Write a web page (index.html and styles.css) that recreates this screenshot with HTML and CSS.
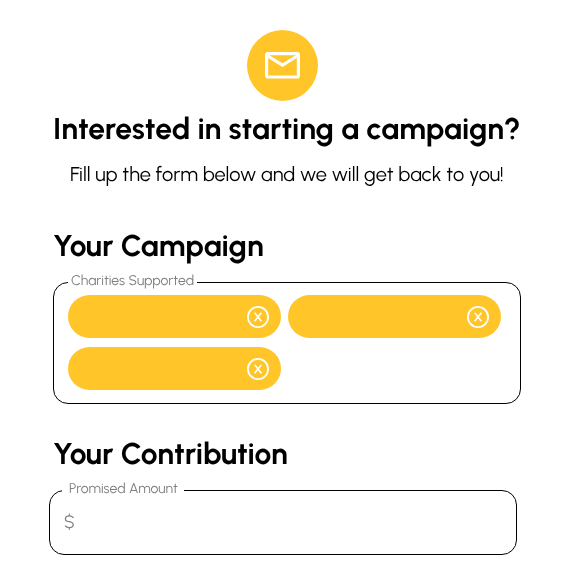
FILE: index.html
```
<!DOCTYPE html>
<html lang="en">
<head>
<meta charset="utf-8">
<title>Start a campaign</title>
<link rel="stylesheet" href="styles.css">
</head>
<body>
<main class="page">
  <header class="intro">
    <div class="badge">
      <svg width="71" height="71" viewBox="0 0 71 71" fill="none" stroke="#fff" stroke-width="3.2" stroke-linejoin="round">
        <rect x="19.6" y="23.6" width="31.8" height="23.4" rx="1.5"/>
        <path d="M20 25.5L35.5 35.2L51 25.5"/>
      </svg>
    </div>
    <h1 class="title">Interested in starting a campaign?</h1>
    <p class="lead">Fill up the form below and we will get back to you!</p>
  </header>
  <form>
    <h2 class="heading campaign">Your Campaign</h2>
    <fieldset class="field charities">
      <legend class="legend">Charities Supported</legend>
      <div class="chips">
        <div class="chip"><svg width="24" height="24" viewBox="0 0 24 24" fill="none" stroke="#fff"><circle cx="12" cy="12" r="10.1" stroke-width="1.8"/><path d="M8.6 7.8L15.4 16.2M15.4 7.8L8.6 16.2" stroke-width="1.6"/></svg></div>
        <div class="chip"><svg width="24" height="24" viewBox="0 0 24 24" fill="none" stroke="#fff"><circle cx="12" cy="12" r="10.1" stroke-width="1.8"/><path d="M8.6 7.8L15.4 16.2M15.4 7.8L8.6 16.2" stroke-width="1.6"/></svg></div>
        <div class="chip"><svg width="24" height="24" viewBox="0 0 24 24" fill="none" stroke="#fff"><circle cx="12" cy="12" r="10.1" stroke-width="1.8"/><path d="M8.6 7.8L15.4 16.2M15.4 7.8L8.6 16.2" stroke-width="1.6"/></svg></div>
      </div>
    </fieldset>
    <h2 class="heading contribution">Your Contribution</h2>
    <fieldset class="field amount">
      <legend class="legend">Promised Amount</legend>
      <span class="currency">$</span>
    </fieldset>
  </form>
</main>
</body>
</html>
```
FILE: styles.css
```
* { box-sizing: border-box; }
body {
  margin: 0;
  background: #fff;
  color: #000;
  font-family: Urbanist, Lato, sans-serif;
  text-rendering: geometricPrecision;
  overflow: hidden;
}
.page { width: 468px; margin: 0 0 0 53px; padding-top: 30px; will-change: transform; }
.intro { white-space: nowrap; }
.badge {
  width: 71px;
  height: 71px;
  margin-left: 194px;
  border-radius: 50%;
  background: #ffc529;
}
.badge svg { display: block; }
.title, .heading { margin: 0; font-size: 30px; line-height: 36px; font-weight: 700; }
.title { margin-top: 10px; }
.lead { margin: 15px 0 0 17px; font-size: 20px; line-height: 24px; }
.campaign { margin-top: 42px; }
.contribution { margin-top: 32px; }
.field {
  min-width: 0;
  width: 468px;
  margin: 0;
  border: 1px solid #000;
  border-radius: 15px;
}
.charities { height: 130px; margin-top: 10px; padding: 4px 14px 0; }
.amount { height: 73px; margin: 10px 0 0 -4px; padding: 11px 14px 0; }
.legend {
  height: 17px;
  color: #808080;
  font-size: 14px;
  line-height: 14px;
  white-space: nowrap;
}
.charities .legend { width: 129px; padding: 0 0 0 3px; }
.amount .legend { width: 122px; margin-left: -2px; padding: 0 0 0 7px; }
.chips { display: flex; flex-wrap: wrap; gap: 9px 7px; }
.chip {
  display: flex;
  align-items: center;
  justify-content: flex-end;
  width: 213px;
  height: 43px;
  padding-right: 11px;
  border-radius: 22px;
  background: #ffc529;
}
.currency { display: block; color: #808080; font-size: 18px; line-height: 24px; }
```
